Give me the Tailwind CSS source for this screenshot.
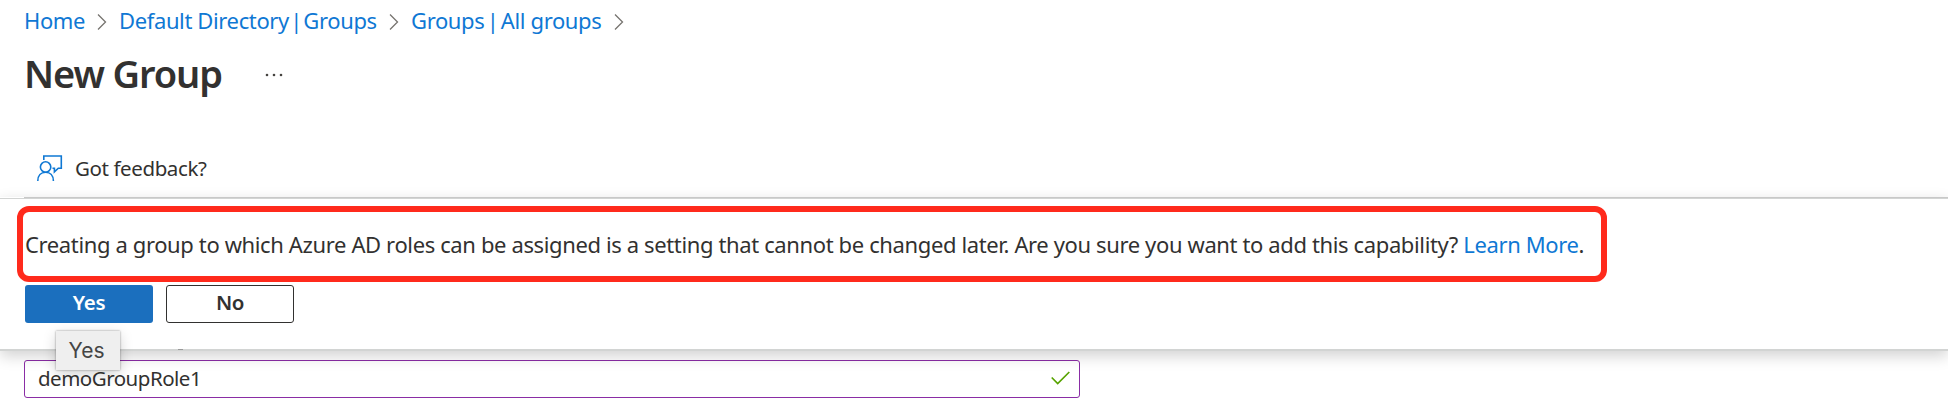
<!DOCTYPE html>
<html lang="en">
<head>
<meta charset="utf-8">
<title>New Group</title>
<script src="https://cdn.jsdelivr.net/npm/@tailwindcss/browser@4"></script>
</head>
<body class="w-[1948px] h-[416px] overflow-hidden bg-white font-['Noto_Sans','Open_Sans',sans-serif] text-[22px] leading-[30px] tracking-[-0.373px] text-[#323130] whitespace-nowrap">
<header class="h-[197px] flex flex-col">
  <nav class="mt-[5px] ml-[24px] h-[30px] flex items-center text-[#0f78d4]">
    <a class="w-[60px]">Home</a>
    <svg class="mt-[3px] ml-[12px] w-[12px] h-[18px] mr-[11px]" viewBox="0 0 12 18" fill="none" stroke="#76746f" stroke-width="1.3"><path d="M2 1.500l7.500 7.500L2 16.500"/></svg>
    <a class="w-[258px]">Default Directory<span class="[word-spacing:-4px]"> | </span>Groups</a>
    <svg class="mt-[3px] ml-[11px] w-[12px] h-[18px] mr-[11px]" viewBox="0 0 12 18" fill="none" stroke="#76746f" stroke-width="1.3"><path d="M2 1.500l7.500 7.500L2 16.500"/></svg>
    <a class="w-[191px]">Groups<span class="[word-spacing:-3px]"> | </span>All groups</a>
    <svg class="mt-[3px] ml-[11px] w-[12px] h-[18px]" viewBox="0 0 12 18" fill="none" stroke="#76746f" stroke-width="1.3"><path d="M2 1.500l7.500 7.500L2 16.500"/></svg>
  </nav>
  <div class="mt-[12px] ml-[24px] h-[52px] flex items-center">
    <h1 class="w-[241px] text-[38px] leading-[52px] font-semibold tracking-[-1.1px]">New Group</h1>
    <svg class="w-[20px] h-[4px] mt-[4px]" viewBox="0 0 20 4" fill="#45433f"><circle cx="2" cy="2" r="1.3"/><circle cx="9" cy="2" r="1.3"/><circle cx="16" cy="2" r="1.3"/></svg>
  </div>
  <div class="mt-[54px] ml-[36px] h-[30px] flex items-center">
    <svg class="w-[28px] h-[28px] mr-[11px]" viewBox="0 0 28 28" fill="none" stroke="#0f78d4" stroke-width="1.6"><path d="M7.800 6V2h17.500v12.200h-3l-3.900 3.700v-3.700H16.500"/><circle cx="9.600" cy="13" r="5.200"/><path d="M1.800 27c0-5.500 3.200-8.800 7.800-8.800s7.800 3.300 7.800 8.800"/></svg>
    <span class="text-[20.5px] tracking-[-0.4px] pb-px">Got feedback?</span>
  </div>
</header>
<section class="relative z-10 h-[154px] bg-white flex flex-col border-b-2 border-[#d2d4d3] shadow-[0_5px_14px_rgba(0,0,0,0.18)]">
  <div class="h-[2px] flex flex-col"><div class="ml-[24px] h-px shrink-0 bg-[#c8c8c8]"></div><div class="h-px shrink-0 bg-[#d2d4d3]"></div></div>
  <div class="mt-[7px] ml-[17px] w-[1590px] h-[76px] border-6 border-[#ff2a1c] rounded-[12px] flex items-center pl-[2px]">
    <p>Creating a group to which Azure AD roles can be assigned is a setting that cannot be changed later. Are you sure you want to add this capability? <a class="text-[#0f78d4]">Learn More</a>.</p>
  </div>
  <div class="mt-[3px] ml-[25px] flex gap-[13px] font-semibold text-[20.5px]">
    <button class="w-[128px] h-[38px] rounded-[3px] bg-[#1b6fbe] text-white pb-[4px]">Yes</button>
    <button class="w-[128px] h-[38px] rounded-[3px] border border-[#323130] bg-white pb-[4px]">No</button>
  </div>
  <div class="absolute left-[178px] top-[152px] w-[5px] h-px bg-[#999]"></div>
  <div class="absolute left-[56px] top-[134px] w-[64px] h-[39px] bg-[#efefef] shadow-[0_0_2px_rgba(0,0,0,0.4),0_4px_14px_rgba(0,0,0,0.18)] text-center leading-[40px] font-[Inter,sans-serif] text-[21px] tracking-normal text-[#454545] pr-[3px]">Yes</div>
</section>
<div class="mt-[9px] ml-[24px] w-[1056px] h-[38px] rounded-[3px] border border-[#8a2da5] flex items-center justify-between pl-[13px] pr-[9px]">
  <span class="text-[20.5px] tracking-[-0.5px] pb-[3px]">demoGroupRole1</span>
  <svg class="w-[19px] h-[14px] mb-[2px]" viewBox="0 0 19 14" fill="none" stroke="#57a300" stroke-width="1.700"><path d="M.7 6.500l6 6L18.300 1"/></svg>
</div>
</body>
</html>
